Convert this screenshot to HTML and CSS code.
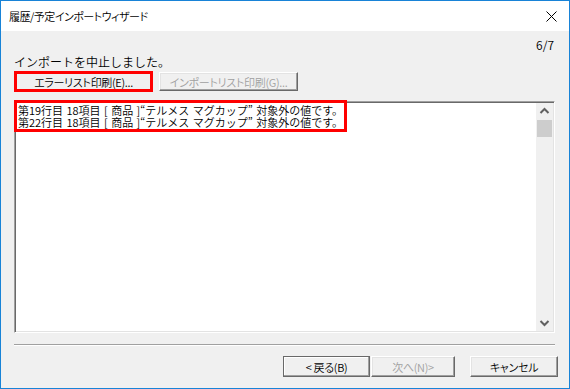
FILE: index.html
```html
<!DOCTYPE html>
<html lang="ja">
<head>
  <meta charset="UTF-8">
  <title>履歴/予定インポートウィザード</title>
  <link rel="stylesheet" href="styles.css">
</head>
<body>
  <div class="window">
    <div class="titlebar">
      <span class="title">履歴/予定インポートウィザード</span>
      <svg class="close" width="11" height="11" viewBox="0 0 11 11">
        <path d="M0.5 0.5 L10.5 10.5 M10.5 0.5 L0.5 10.5" stroke="#000" stroke-width="1" fill="none"/>
      </svg>
    </div>

    <div class="body">
      <div class="step">6/7</div>
      <p class="status">インポートを中止しました。</p>

      <div class="actions">
        <button class="btn btn-print mark">エラーリスト印刷(E)...</button>
        <button class="btn btn-print btn-small" disabled>インポートリスト印刷(G)...</button>
      </div>

      <div class="log">
        <div class="log-text">
          <div class="lines mark">
            <div>第19行目 18項目 [ 商品 ]“テルメス マグカップ” 対象外の値です。</div>
            <div>第22行目 18項目 [ 商品 ]“テルメス マグカップ” 対象外の値です。</div>
          </div>
        </div>
        <div class="scrollbar">
          <svg class="arrow" width="17" height="17" viewBox="0 0 17 17">
            <path d="M4.5 10 L8.5 6 L12.5 10" stroke="#606060" stroke-width="2" fill="none"/>
          </svg>
          <div class="thumb"></div>
          <div class="track"></div>
          <svg class="arrow" width="17" height="17" viewBox="0 0 17 17">
            <path d="M4.5 7 L8.5 11 L12.5 7" stroke="#606060" stroke-width="2" fill="none"/>
          </svg>
        </div>
      </div>

      <div class="separator"></div>

      <div class="footer">
        <button class="btn btn-back">&lt; 戻る(B)</button>
        <button class="btn btn-next" disabled>次へ(N)&gt;</button>
        <button class="btn btn-cancel">キャンセル</button>
      </div>
    </div>
  </div>
</body>
</html>
```

FILE: styles.css
```css
html, body {
  margin: 0;
  padding: 0;
}
body {
  font-family: "Noto Sans CJK JP", "Noto Sans", sans-serif;
  font-size: 12px;
  font-weight: 350;
  color: #000;
  background: #f0f0f0;
}
.window {
  width: 570px;
  height: 389px;
  box-sizing: border-box;
  border: 1px solid #1883d7;
  display: flex;
  flex-direction: column;
  background: #f0f0f0;
}
.titlebar {
  height: 30px;
  flex: none;
  background: #fff;
  display: flex;
  align-items: center;
  padding: 0 12px 0 8px;
}
.title {
  flex: 1;
  font-size: 11px;
  line-height: 14px;
  letter-spacing: -0.5px;
  font-feature-settings: "palt" 1;
}
.close {
  display: block;
}
.body {
  flex: 1;
  display: flex;
  flex-direction: column;
  padding: 7px 14px 0 13px;
}
.step {
  text-align: right;
  line-height: 14px;
  height: 14px;
  padding-right: 1px;
}
.status {
  margin: 3px 0 0;
  line-height: 14px;
}
.actions {
  display: flex;
  align-items: center;
  margin-top: 2px;
}
.btn {
  font-family: inherit;
  font-size: 11px;
  font-weight: 350;
  font-feature-settings: "palt" 1;
  letter-spacing: -0.3px;
  white-space: nowrap;
  color: #000;
  background: #f0f0f0;
  border: 1px solid;
  border-color: #fff #696969 #696969 #fff;
  box-shadow: inset -1px -1px 0 #a0a0a0, inset 1px 1px 0 #e3e3e3;
  padding: 0;
  margin: 0;
  line-height: 14px;
}
.btn:disabled {
  color: #a0a0a0;
}
.btn-print {
  width: 139px;
  height: 21px;
}
.btn-small {
  height: 19px;
  margin-left: 6px;
}
.mark {
  outline: 3px solid #f00;
  outline-offset: -3px;
}
.log {
  margin-top: 9px;
  height: 232px;
  width: 541px;
  box-sizing: border-box;
  display: flex;
  background: #fff;
  border: 1px solid;
  border-color: #a0a0a0 #fff #fff #a0a0a0;
  box-shadow: inset 1px 1px 0 #696969, inset -1px -1px 0 #e3e3e3;
  padding: 1px;
}
.log-text {
  flex: 1;
  padding: 1px 0 0 2px;
}
.lines {
  display: inline-block;
  font-size: 11px;
  line-height: 12px;
  word-spacing: 1px;
  outline-offset: 1px;
  white-space: nowrap;
}
.scrollbar {
  width: 17px;
  display: flex;
  flex-direction: column;
  background: #f0f0f0;
}
.arrow {
  display: block;
  flex: none;
}
.thumb {
  height: 17px;
  margin: 0 1px;
  background: #cdcdcd;
}
.track {
  flex: 1;
}
.separator {
  margin-top: 11px;
  height: 1px;
  border-top: 1px solid #a0a0a0;
  background: #fff;
}
.footer {
  display: flex;
  justify-content: flex-end;
  margin-top: 10px;
  margin-right: -3px;
}
.footer .btn {
  height: 21px;
}
.btn-back {
  width: 87px;
  border-color: #696969;
  box-shadow: inset -1px -1px 0 #a0a0a0, inset 1px 1px 0 #fff;
}
.btn-next {
  width: 84px;
  margin-left: 1px;
}
.btn-cancel {
  width: 88px;
  margin-left: 15px;
}
```
